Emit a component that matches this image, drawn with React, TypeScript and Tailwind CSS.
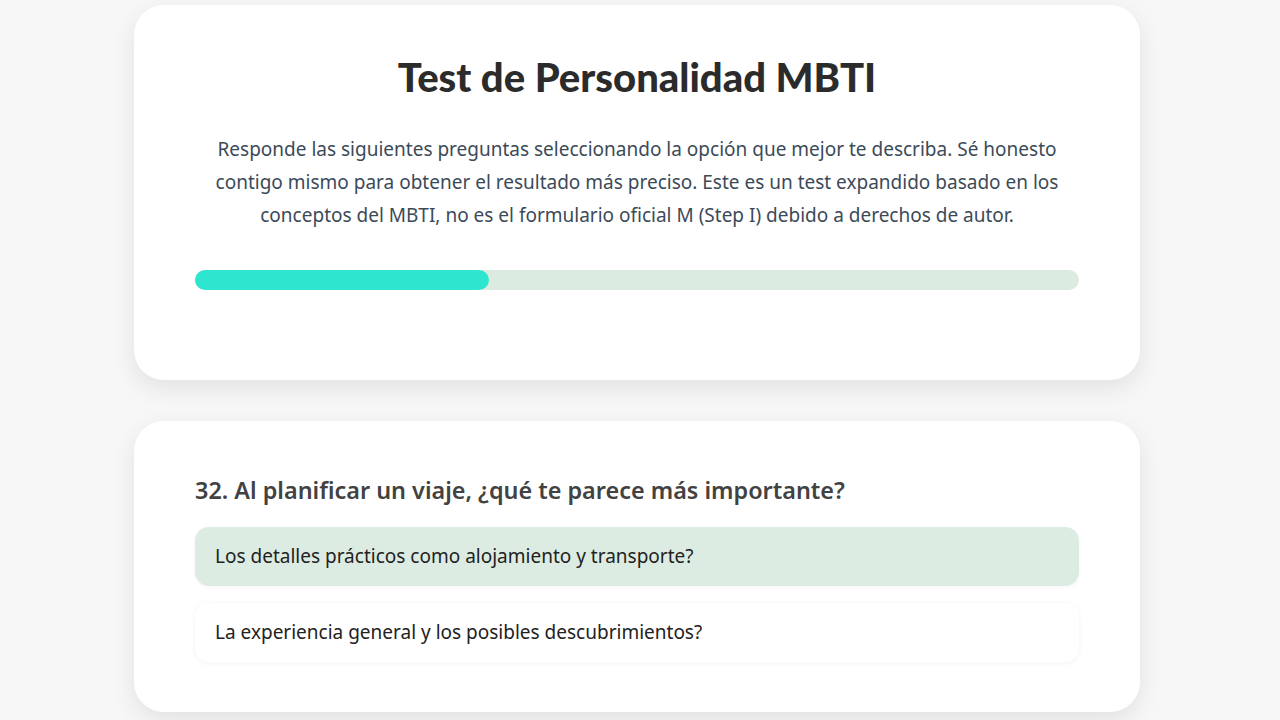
import React, { useState } from "react";

const options = [
  "Los detalles prácticos como alojamiento y transporte?",
  "La experiencia general y los posibles descubrimientos?",
];

export default function App() {
  const [selected, setSelected] = useState<number>(0);
  const progress = 33.3;

  return (
    <div
      className="min-h-screen bg-[#f7f7f7] pt-[5px] pr-[6px] pb-10"
      style={{ fontFamily: '"Noto Sans", "Open Sans", sans-serif' }}
    >
      <div className="mx-auto flex w-[1006px] flex-col gap-[41px]">
        <div className="rounded-[30px] bg-white px-[61px] pt-[44px] pb-[90px] shadow-[0_8px_24px_rgba(0,0,0,0.09)]">
          <h1 className="text-center font-['Lato',sans-serif] text-[40px] leading-[56px] font-black text-[#2b2b2b]">
            Test de Personalidad MBTI
          </h1>
          <p className="mt-[28px] px-2 text-center text-[19px] leading-[33px] text-[#3c4a58]">
            Responde las siguientes preguntas seleccionando la opción que mejor te describa. Sé
            honesto contigo mismo para obtener el resultado más preciso. Este es un test expandido
            basado en los conceptos del MBTI, no es el formulario oficial M (Step I) debido a
            derechos de autor.
          </p>
          <div className="mt-[38px] h-[20px] w-full rounded-full bg-[#dcebe1]">
            <div
              className="h-full rounded-full bg-[#2ee5d0]"
              style={{ width: `${progress}%` }}
            />
          </div>
        </div>

        <div className="rounded-[30px] bg-white px-[61px] pt-[52px] pb-[50px] shadow-[0_8px_24px_rgba(0,0,0,0.09)]">
          <h2 className="text-[23.4px] leading-[34px] font-semibold text-[#424242]">
            32. Al planificar un viaje, ¿qué te parece más importante?
          </h2>
          <div className="mt-[20px] flex flex-col gap-[17px]">
            {options.map((opt, i) => (
              <button
                key={i}
                onClick={() => setSelected(i)}
                className={
                  selected === i
                    ? "h-[59px] rounded-[14px] bg-[#ddece2] px-[20px] text-left text-[19px] text-[#222] shadow-[0_1px_4px_rgba(0,0,0,0.04)]"
                    : "h-[59px] rounded-[14px] bg-white px-[20px] text-left text-[19px] text-[#222] shadow-[0_1px_6px_rgba(0,0,0,0.05)]"
                }
              >
                {opt}
              </button>
            ))}
          </div>
        </div>
      </div>
    </div>
  );
}
